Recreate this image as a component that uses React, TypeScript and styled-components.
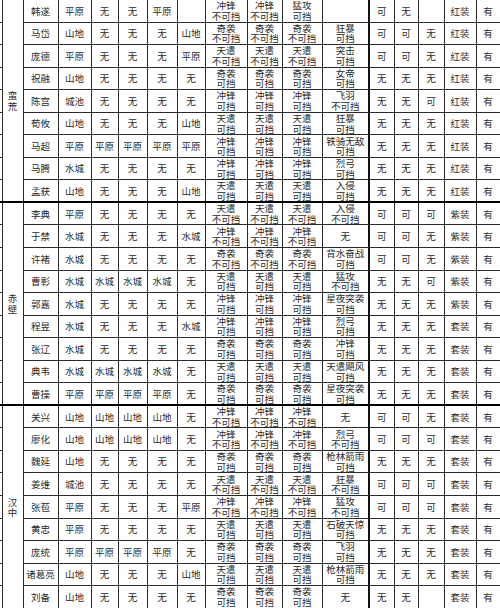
import React from "react"
import styled, { createGlobalStyle } from "styled-components"

const GlobalStyle = createGlobalStyle`
    html, body {
        margin: 0;
        padding: 0;
        background: #fff;
        overflow: hidden;
    }
`

const Sheet = styled.table`
    width: 500px;
    table-layout: fixed;
    border-collapse: collapse;
    margin-top: -1px;
    font-family: "Noto Sans CJK SC", "Noto Sans", sans-serif;
    font-size: 9.5px;
    line-height: 10.5px;
    color: #2a2a2a;
    text-align: center;
`

const Row = styled.tr`
    height: 22.55px;
`

const Cell = styled.td<{ $groupEnd?: boolean; $splitRight?: boolean }>`
    padding: 0;
    height: 21px;
    border: 1px solid #2a2a2a;
    border-bottom: ${(p) => (p.$groupEnd ? "2px solid #000" : "1px solid #2a2a2a")};
    border-right: ${(p) => (p.$splitRight ? "2px solid #111" : "1px solid #2a2a2a")};
    vertical-align: middle;
    white-space: nowrap;
    overflow: hidden;
`

const EdgeCell = styled(Cell)`
    border-left: none;
`

const GroupCell = styled(Cell)`
    height: auto;
`

const Line = styled.div`
    display: block;
    height: 10.5px;
    line-height: 10.5px;
`

// name, 5 terrain, 4 skills, 3 flags, equip, has
type Hero = string[]

const groups: { label: string; rows: Hero[] }[] = [
    {
        label: "蛮荒",
        rows: [
            ["韩遂", "平原", "无", "无", "平原", "", "冲锋/不可挡", "冲锋/不可挡", "猛攻/可挡", "", "可", "无", "", "红装", "有"],
            ["马岱", "山地", "无", "无", "无", "山地", "奇袭/不可挡", "奇袭/不可挡", "奇袭/不可挡", "狂暴/可挡", "可", "可", "无", "红装", "有"],
            ["庞德", "平原", "无", "无", "无", "平原", "天遣/不可挡", "天遣/不可挡", "天遣/不可挡", "突击/可挡", "可", "可", "无", "红装", "有"],
            ["祝融", "山地", "无", "无", "无", "无", "奇袭/可挡", "奇袭/可挡", "奇袭/可挡", "女帝/可挡", "无", "无", "无", "红装", "有"],
            ["陈宫", "城池", "无", "无", "无", "无", "冲锋/可挡", "冲锋/可挡", "冲锋/可挡", "飞羽/不可挡", "无", "无", "可", "红装", "有"],
            ["荀攸", "山地", "无", "无", "无", "山地", "天遣/可挡", "天遣/可挡", "天遣/可挡", "狂暴/可挡", "无", "无", "无", "红装", "有"],
            ["马超", "平原", "平原", "平原", "平原", "平原", "冲锋/可挡", "冲锋/可挡", "冲锋/可挡", "铁骑无敌/可挡", "无", "无", "无", "红装", "有"],
            ["马腾", "水城", "无", "无", "无", "无", "冲锋/可挡", "冲锋/可挡", "冲锋/可挡", "烈弓/可挡", "无", "无", "无", "红装", "有"],
            ["孟获", "山地", "无", "无", "无", "山地", "天遣/可挡", "天遣/可挡", "天遣/可挡", "入侵/可挡", "无", "无", "无", "红装", "有"],
        ],
    },
    {
        label: "赤壁",
        rows: [
            ["李典", "平原", "无", "无", "无", "无", "天遣/不可挡", "天遣/不可挡", "天遣/不可挡", "入侵/不可挡", "可", "可", "可", "紫装", "有"],
            ["于禁", "水城", "无", "无", "无", "水城", "冲锋/不可挡", "冲锋/不可挡", "冲锋/不可挡", "无", "可", "可", "无", "紫装", "有"],
            ["许褚", "水城", "无", "无", "无", "无", "奇袭/不可挡", "奇袭/不可挡", "奇袭/不可挡", "背水奋战/可挡", "可", "可", "无", "紫装", "有"],
            ["曹彰", "水城", "水城", "水城", "水城", "无", "天遣/可挡", "天遣/可挡", "天遣/可挡", "猛攻/不可挡", "无", "无", "可", "紫装", "有"],
            ["郭嘉", "水城", "无", "无", "无", "无", "冲锋/可挡", "冲锋/可挡", "冲锋/可挡", "星夜突袭/可挡", "无", "无", "无", "紫装", "有"],
            ["程昱", "水城", "无", "无", "无", "水城", "冲锋/可挡", "冲锋/可挡", "冲锋/可挡", "烈弓/可挡", "无", "无", "无", "套装", "有"],
            ["张辽", "水城", "无", "无", "无", "无", "奇袭/可挡", "奇袭/可挡", "奇袭/可挡", "冲锋/可挡", "无", "无", "无", "套装", "有"],
            ["典韦", "水城", "水城", "水城", "水城", "无", "天遣/可挡", "天遣/可挡", "天遣/可挡", "天遣飓风/可挡", "无", "无", "无", "套装", "有"],
            ["曹操", "平原", "平原", "平原", "平原", "无", "奇袭/可挡", "奇袭/可挡", "奇袭/可挡", "星夜突袭/可挡", "无", "无", "无", "套装", "有"],
        ],
    },
    {
        label: "汉中",
        rows: [
            ["关兴", "山地", "山地", "山地", "山地", "无", "冲锋/不可挡", "冲锋/不可挡", "冲锋/不可挡", "无", "可", "可", "无", "套装", "有"],
            ["廖化", "山地", "山地", "山地", "山地", "无", "冲锋/不可挡", "冲锋/不可挡", "冲锋/不可挡", "烈弓/不可挡", "可", "可", "可", "套装", "有"],
            ["魏延", "山地", "无", "无", "无", "无", "奇袭/可挡", "奇袭/可挡", "奇袭/可挡", "枪林箭雨/可挡", "无", "无", "无", "套装", "有"],
            ["姜维", "城池", "无", "无", "无", "无", "天遣/不可挡", "天遣/不可挡", "天遣/不可挡", "狂暴/不可挡", "可", "可", "可", "套装", "有"],
            ["张苞", "平原", "无", "无", "无", "平原", "冲锋/不可挡", "冲锋/不可挡", "冲锋/不可挡", "猛攻/不可挡", "可", "可", "可", "套装", "有"],
            ["黄忠", "平原", "无", "无", "无", "无", "天遣/可挡", "天遣/可挡", "天遣/可挡", "石破天惊/可挡", "无", "无", "无", "套装", "有"],
            ["庞统", "平原", "平原", "平原", "平原", "无", "奇袭/可挡", "奇袭/可挡", "奇袭/可挡", "飞羽/可挡", "无", "无", "无", "套装", "有"],
            ["诸葛亮", "山地", "无", "无", "无", "山地", "天遣/可挡", "天遣/可挡", "天遣/可挡", "枪林箭雨/可挡", "无", "无", "无", "套装", "有"],
            ["刘备", "山地", "无", "无", "无", "无", "奇袭/可挡", "奇袭/可挡", "奇袭/可挡", "无", "无", "无", "", "套装", "有"],
        ],
    },
]

const widths = [2, 21, 35, 33, 27, 29, 30, 28, 42, 35, 40, 47, 25, 24, 26, 32, 24]

const Text: React.FC<{ value: string }> = ({ value }) => (
    <>
        {value.split("/").map((part, i) => (
            <Line key={i}>{part}</Line>
        ))}
    </>
)

const App: React.FC = () => {
    return (
        <>
            <GlobalStyle />
            <Sheet>
                <colgroup>
                    {widths.map((w, i) => (
                        <col key={i} style={{ width: w }} />
                    ))}
                </colgroup>
                <tbody>
                    {groups.map((g, gi) =>
                        g.rows.map((hero, ri) => {
                            const end = ri === g.rows.length - 1 && gi < groups.length - 1
                            return (
                                <Row key={hero[0]}>
                                    <EdgeCell $groupEnd={end} />
                                    {ri === 0 && (
                                        <GroupCell rowSpan={g.rows.length} $groupEnd={gi < groups.length - 1}>
                                            <Text value={g.label.split("").join("/")} />
                                        </GroupCell>
                                    )}
                                    {hero.map((v, ci) => (
                                        <Cell key={ci} $groupEnd={end} $splitRight={ci === 9}>
                                            <Text value={v} />
                                        </Cell>
                                    ))}
                                </Row>
                            )
                        })
                    )}
                </tbody>
            </Sheet>
        </>
    )
}

export default App
